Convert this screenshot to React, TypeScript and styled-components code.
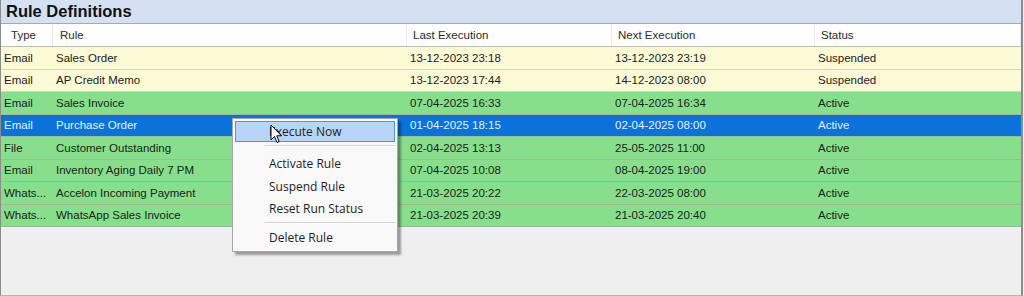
import React from 'react'
import styled, { createGlobalStyle } from 'styled-components'

const GlobalStyle = createGlobalStyle`
  html, body {
    margin: 0;
    padding: 0;
    background: #efefef;
  }
  body {
    font-family: 'Liberation Sans', Arial, sans-serif;
  }
`

type Tone = 'suspended' | 'active' | 'selected'

interface RuleRow {
  type: string
  rule: string
  last: string
  next: string
  status: string
  tone: Tone
}

const rows: RuleRow[] = [
  { type: 'Email', rule: 'Sales Order', last: '13-12-2023 23:18', next: '13-12-2023 23:19', status: 'Suspended', tone: 'suspended' },
  { type: 'Email', rule: 'AP Credit Memo', last: '13-12-2023 17:44', next: '14-12-2023 08:00', status: 'Suspended', tone: 'suspended' },
  { type: 'Email', rule: 'Sales Invoice', last: '07-04-2025 16:33', next: '07-04-2025 16:34', status: 'Active', tone: 'active' },
  { type: 'Email', rule: 'Purchase Order', last: '01-04-2025 18:15', next: '02-04-2025 08:00', status: 'Active', tone: 'selected' },
  { type: 'File', rule: 'Customer Outstanding', last: '02-04-2025 13:13', next: '25-05-2025 11:00', status: 'Active', tone: 'active' },
  { type: 'Email', rule: 'Inventory Aging Daily 7 PM', last: '07-04-2025 10:08', next: '08-04-2025 19:00', status: 'Active', tone: 'active' },
  { type: 'Whats...', rule: 'Accelon Incoming Payment', last: '21-03-2025 20:22', next: '22-03-2025 08:00', status: 'Active', tone: 'active' },
  { type: 'Whats...', rule: 'WhatsApp Sales Invoice', last: '21-03-2025 20:39', next: '21-03-2025 20:40', status: 'Active', tone: 'active' },
]

const toneBg: Record<Tone, string> = {
  suspended: '#fdfad6',
  active: '#87df8c',
  selected: '#0a72d9',
}

const COLUMNS = '52px 354px 205px 203px 1fr'

const Window = styled.div`
  position: relative;
  height: 296px;
  box-sizing: border-box;
  border-left: 1px solid #8c8c8c;
  border-right: 2px solid #8c8c8c;
  border-bottom: 1px solid #b4b4b4;
  margin-right: 1px;
  background: #efefef;
  overflow: hidden;
`

const TitleBar = styled.div`
  height: 23px;
  background: #d3e1f2;
  border-bottom: 1px solid #a9a9a9;
  padding-left: 5px;
  display: flex;
  align-items: center;
  font-size: 16.5px;
  font-weight: bold;
  color: #111;
`

const HeaderRow = styled.div`
  display: grid;
  grid-template-columns: ${COLUMNS};
  height: 22px;
  background: #fff;
  border-bottom: 1px solid #b9b9b9;
`

const HeaderCell = styled.div<{ $pad?: number }>`
  display: flex;
  align-items: center;
  padding-left: ${({ $pad }) => $pad ?? 6}px;
  font-size: 11.5px;
  color: #2b2b2b;
  border-right: 1px solid #ebebeb;
`

const Row = styled.div<{ $tone: Tone }>`
  display: grid;
  grid-template-columns: ${COLUMNS};
  height: 22.5px;
  box-sizing: border-box;
  background: ${({ $tone }) => toneBg[$tone]};
  border-bottom: 1px solid ${({ $tone }) => ($tone === 'suspended' ? '#d8d6bf' : '#9bb79c')};
  color: ${({ $tone }) => ($tone === 'selected' ? '#e8f1fb' : '#1b1b1b')};
`

const Cell = styled.div`
  display: flex;
  align-items: center;
  padding-left: 3px;
  font-size: 11.5px;
  white-space: nowrap;
  overflow: hidden;
`

const Menu = styled.div`
  position: absolute;
  left: 231px;
  top: 118px;
  width: 166px;
  box-sizing: border-box;
  padding: 2px 2px 1px;
  background: #f9f9f9;
  border: 1px solid #a7a7a7;
  box-shadow: 3px 3px 2px rgba(0, 0, 0, 0.35);
  font-family: 'Open Sans', 'Noto Sans', sans-serif;
  font-size: 12px;
  color: #1e1e1e;
`

const MenuItem = styled.div<{ $hot?: boolean }>`
  height: 21px;
  margin-bottom: 1.5px;
  box-sizing: border-box;
  display: flex;
  align-items: center;
  padding-left: 33px;
  border: 1px solid ${({ $hot }) => ($hot ? '#4a94e3' : 'transparent')};
  background: ${({ $hot }) => ($hot ? '#b7d5f6' : 'transparent')};
`

const Separator = styled.div<{ $after?: number }>`
  height: 1px;
  margin: 3px 0 ${({ $after }) => $after ?? 5}px 30px;
  background: #d4d4d4;
  border-bottom: 1px solid #fff;
`

const Cursor = styled.svg`
  position: absolute;
  left: 269px;
  top: 124px;
`

export default function App() {
  return (
    <>
      <GlobalStyle />
      <Window>
        <TitleBar>Rule Definitions</TitleBar>
        <HeaderRow>
          <HeaderCell $pad={10}>Type</HeaderCell>
          <HeaderCell $pad={7}>Rule</HeaderCell>
          <HeaderCell>Last Execution</HeaderCell>
          <HeaderCell>Next Execution</HeaderCell>
          <HeaderCell>Status</HeaderCell>
        </HeaderRow>
        {rows.map((r, i) => (
          <Row key={i} $tone={r.tone}>
            <Cell>{r.type}</Cell>
            <Cell>{r.rule}</Cell>
            <Cell>{r.last}</Cell>
            <Cell>{r.next}</Cell>
            <Cell>{r.status}</Cell>
          </Row>
        ))}
        <Menu>
          <MenuItem $hot>Execute Now</MenuItem>
          <Separator $after={6} />
          <MenuItem>Activate Rule</MenuItem>
          <MenuItem>Suspend Rule</MenuItem>
          <MenuItem>Reset Run Status</MenuItem>
          <Separator $after={3} />
          <MenuItem>Delete Rule</MenuItem>
        </Menu>
        <Cursor width="13" height="20" viewBox="0 0 13 20">
          <path d="M1 1 L1 16 L4.5 12.5 L7 18.5 L9.2 17.6 L6.8 11.8 L11.5 11.8 Z" fill="#fff" stroke="#000" strokeWidth="1" strokeLinejoin="round" />
        </Cursor>
      </Window>
    </>
  )
}
